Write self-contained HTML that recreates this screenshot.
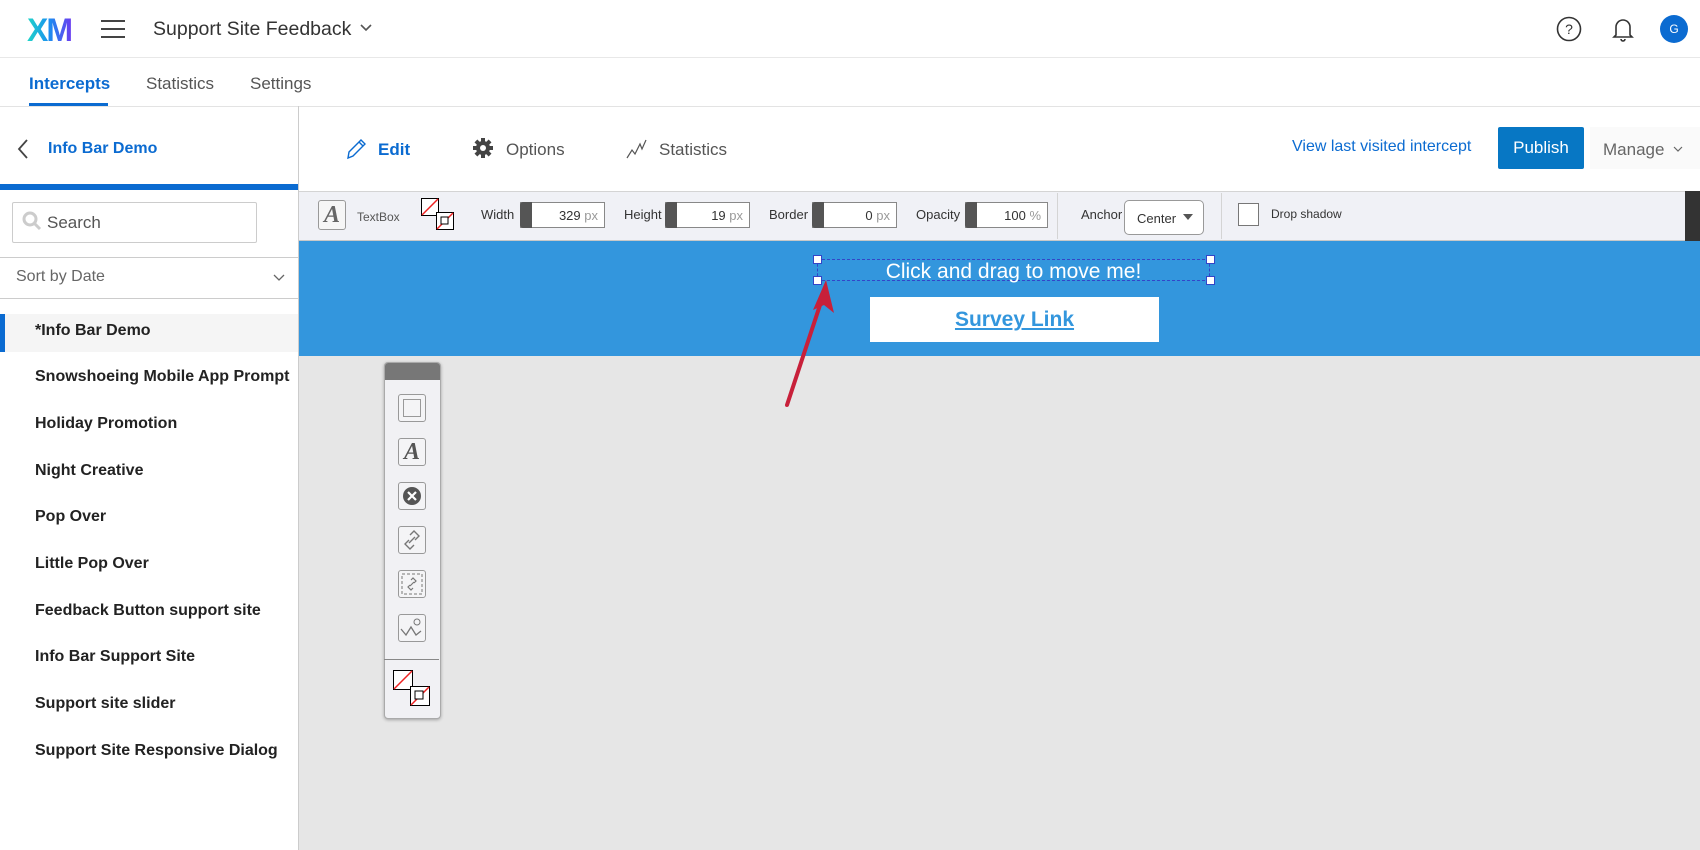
<!DOCTYPE html>
<html><head><meta charset="utf-8"><style>
*{box-sizing:border-box;margin:0;padding:0}
body{width:1700px;height:850px;overflow:hidden;background:#fff;font-family:"Liberation Sans",sans-serif;position:relative;color:#333}
.a{position:absolute;white-space:nowrap}
.lbl{font-size:13px;color:#333}
.num{position:absolute;height:26px;border:1px solid #888;background:#fff;font-size:13px;text-align:right;padding:5px 6px 0 0}
.num .sp{position:absolute;left:-1px;top:-1px;width:12px;height:26px;background:#555;border-radius:3px 0 0 3px}
.num .px{color:#999}
.item{position:absolute;left:35px;font-size:16px;font-weight:bold;color:#222}
.tool{position:absolute;left:14px;width:28px;height:28px;border:1px solid #999;border-radius:3px;background:#f4f4f6}
</style></head><body>
<div class="a" style="left:27px;top:12px;font-size:32px;font-weight:bold;letter-spacing:-2px;background:linear-gradient(90deg,#1fd6c7,#1a8ff0 50%,#6a3df0);-webkit-background-clip:text;color:transparent">XM</div>
<div class="a" style="left:101px;top:20px;width:24px;height:2px;background:#444;box-shadow:0 8px 0 #444,0 16px 0 #444"></div>
<div class="a" style="left:153px;top:18px;font-size:19.5px;color:#333">Support Site Feedback</div>
<svg class="a" style="left:359px;top:23px" width="14" height="10"><path d="M2 2l5 5 5-5" fill="none" stroke="#555" stroke-width="1.6"/></svg>
<svg class="a" style="left:1556px;top:16px" width="26" height="26"><circle cx="13" cy="13" r="11.5" fill="none" stroke="#333" stroke-width="1.6"/><text x="13" y="18" text-anchor="middle" font-size="14" font-family="Liberation Sans" fill="#333">?</text></svg>
<svg class="a" style="left:1611px;top:15px" width="24" height="28"><path d="M5 20V12a7 7 0 0 1 14 0v8l2 2H3z" fill="none" stroke="#333" stroke-width="1.6"/><path d="M10 24a2 2 0 0 0 4 0" fill="none" stroke="#333" stroke-width="1.6"/></svg>
<div class="a" style="left:1660px;top:15px;width:28px;height:28px;border-radius:50%;background:#0b6bd1;color:#fff;font-size:12px;text-align:center;line-height:28px">G</div>
<div class="a" style="left:0;top:57px;width:1700px;height:1px;background:#e8e8e8"></div>
<div class="a" style="left:29px;top:74px;font-size:17px;font-weight:bold;color:#0b6bd1">Intercepts</div>
<div class="a" style="left:29px;top:103px;width:79px;height:3px;background:#0b6bd1"></div>
<div class="a" style="left:146px;top:74px;font-size:17px;color:#555">Statistics</div>
<div class="a" style="left:250px;top:74px;font-size:17px;color:#555">Settings</div>
<div class="a" style="left:0;top:106px;width:1700px;height:1px;background:#e3e3e3"></div>
<div class="a" style="left:298px;top:106px;width:1px;height:744px;background:#ccc"></div>
<svg class="a" style="left:16px;top:138px" width="14" height="22"><path d="M11 2L3 11l8 9" fill="none" stroke="#444" stroke-width="1.8"/></svg>
<div class="a" style="left:48px;top:140px;font-size:16px;font-weight:bold;color:#0b6bd1">Info Bar Demo</div>
<div class="a" style="left:0;top:184px;width:298px;height:6px;background:#0b6bd1"></div>
<div class="a" style="left:12px;top:202px;width:245px;height:41px;border:1px solid #ccc;border-radius:2px"></div>
<svg class="a" style="left:21px;top:210px" width="22" height="22"><circle cx="9" cy="9" r="6" fill="none" stroke="#ccc" stroke-width="3"/><path d="M13 13l6 6" stroke="#ccc" stroke-width="3"/></svg>
<div class="a" style="left:47px;top:213px;font-size:17px;color:#555">Search</div>
<div class="a" style="left:0;top:257px;width:298px;height:1px;background:#ccc"></div>
<div class="a" style="left:16px;top:268px;font-size:16px;color:#666">Sort by Date</div>
<svg class="a" style="left:273px;top:274px" width="12" height="8"><path d="M1 1l5 5 5-5" fill="none" stroke="#666" stroke-width="1.3"/></svg>
<div class="a" style="left:0;top:298px;width:298px;height:1px;background:#ccc"></div>
<div class="a" style="left:0;top:314px;width:298px;height:38px;background:#f5f5f5"></div>
<div class="a" style="left:0;top:314px;width:5px;height:38px;background:#0b6bd1"></div>
<div class="item" style="top:322px">*Info Bar Demo</div>
<div class="item" style="top:368px">Snowshoeing Mobile App Prompt</div>
<div class="item" style="top:415px">Holiday Promotion</div>
<div class="item" style="top:462px">Night Creative</div>
<div class="item" style="top:508px">Pop Over</div>
<div class="item" style="top:555px">Little Pop Over</div>
<div class="item" style="top:602px">Feedback Button support site</div>
<div class="item" style="top:648px">Info Bar Support Site</div>
<div class="item" style="top:695px">Support site slider</div>
<div class="item" style="top:742px">Support Site Responsive Dialog</div>
<div class="a" style="left:299px;top:356px;width:1401px;height:494px;background:#e6e6e6"></div>
<svg class="a" style="left:345px;top:137px" width="22" height="24"><path d="M3 21l1-6L16 3l4 4L8 19z M14 5l4 4" fill="none" stroke="#0b6bd1" stroke-width="1.4"/></svg>
<div class="a" style="left:378px;top:140px;font-size:17px;font-weight:bold;color:#0b6bd1">Edit</div>
<svg class="a" style="left:472px;top:137px" width="22" height="22"><g fill="#444"><circle cx="11" cy="11" r="7"/><rect x="9" y="1" width="4" height="20"/><rect x="1" y="9" width="20" height="4"/><rect x="9" y="1" width="4" height="20" transform="rotate(45 11 11)"/><rect x="9" y="1" width="4" height="20" transform="rotate(-45 11 11)"/></g><circle cx="11" cy="11" r="3" fill="#fff"/></svg>
<div class="a" style="left:506px;top:140px;font-size:17px;color:#555">Options</div>
<svg class="a" style="left:626px;top:138px" width="22" height="22"><path d="M1 20l5-8 3 4 5-10 2 5 4-9" fill="none" stroke="#555" stroke-width="1.2"/></svg>
<div class="a" style="left:659px;top:140px;font-size:17px;color:#555">Statistics</div>
<div class="a" style="left:1292px;top:138px;font-size:16px;color:#0b6bd1">View last visited intercept</div>
<div class="a" style="left:1498px;top:127px;width:86px;height:42px;background:#0777c4;border-radius:2px;color:#fff;font-size:17px;text-align:center;line-height:42px">Publish</div>
<div class="a" style="left:1590px;top:127px;width:110px;height:42px;background:#fafafa"></div>
<div class="a" style="left:1603px;top:140px;font-size:17px;color:#666">Manage</div>
<svg class="a" style="left:1673px;top:146px" width="10" height="7"><path d="M1 1l4 4 4-4" fill="none" stroke="#666" stroke-width="1.2"/></svg>
<div class="a" style="left:299px;top:191px;width:1401px;height:50px;background:#f0f1f6;border-top:1px solid #d4d4d4;border-bottom:1px solid #c8c8c8"></div>
<div class="a" style="left:318px;top:200px;width:28px;height:30px;border:1px solid #999;border-radius:3px;background:#f6f6f6;font-family:'Liberation Serif',serif;font-style:italic;font-weight:bold;font-size:24px;color:#666;text-align:center;line-height:28px">A</div>
<div class="a lbl" style="left:357px;top:210px;color:#555;font-size:12px">TextBox</div>
<svg class="a" style="left:420px;top:197px" width="36" height="36"><rect x="1.5" y="1.5" width="17" height="17" fill="#fff" stroke="#000"/><path d="M2 18L18 2" stroke="#e22" stroke-width="1.5"/><rect x="16.5" y="15.5" width="17" height="17" fill="#fff" stroke="#000"/><path d="M17 32L33 16" stroke="#e22" stroke-width="1.5"/><rect x="21" y="20" width="7" height="7" fill="#fff" stroke="#000"/></svg>
<div class="a lbl" style="left:481px;top:207px">Width</div>
<div class="num" style="left:520px;top:202px;width:85px"><span class="sp"></span>329 <span class="px">px</span></div>
<div class="a lbl" style="left:624px;top:207px">Height</div>
<div class="num" style="left:665px;top:202px;width:85px"><span class="sp"></span>19 <span class="px">px</span></div>
<div class="a lbl" style="left:769px;top:207px">Border</div>
<div class="num" style="left:812px;top:202px;width:85px"><span class="sp"></span>0 <span class="px">px</span></div>
<div class="a lbl" style="left:916px;top:207px">Opacity</div>
<div class="num" style="left:965px;top:202px;width:83px"><span class="sp"></span>100 <span class="px">%</span></div>
<div class="a" style="left:1057px;top:193px;width:1px;height:46px;background:#d4d4d4"></div>
<div class="a lbl" style="left:1081px;top:207px">Anchor</div>
<div class="a" style="left:1124px;top:200px;width:80px;height:35px;border:1px solid #999;border-radius:5px;background:#fff;font-size:13px;padding:10px 0 0 12px">Center</div>
<svg class="a" style="left:1183px;top:214px" width="10" height="6"><path d="M0 0h10L5 6z" fill="#555"/></svg>
<div class="a" style="left:1221px;top:193px;width:1px;height:46px;background:#d4d4d4"></div>
<div class="a" style="left:1238px;top:203px;width:21px;height:23px;border:1px solid #777;background:#fff"></div>
<div class="a lbl" style="left:1271px;top:207px;font-size:12px">Drop shadow</div>
<div class="a" style="left:1685px;top:191px;width:15px;height:50px;background:#333"></div>
<div class="a" style="left:299px;top:241px;width:1401px;height:115px;background:#3396dd"></div>
<div class="a" style="left:817px;top:259px;width:393px;height:22px;border:1px dashed #3345c8"></div>
<div class="a" style="left:813px;top:255px;width:9px;height:9px;border:1px solid #3345c8;background:#fff"></div>
<div class="a" style="left:1206px;top:255px;width:9px;height:9px;border:1px solid #3345c8;background:#fff"></div>
<div class="a" style="left:813px;top:276px;width:9px;height:9px;border:1px solid #3345c8;background:#fff"></div>
<div class="a" style="left:1206px;top:276px;width:9px;height:9px;border:1px solid #3345c8;background:#fff"></div>
<div class="a" style="left:817px;top:260px;width:393px;text-align:center;font-size:21px;color:#fff">Click and drag to move me!</div>
<div class="a" style="left:870px;top:297px;width:289px;height:45px;background:#fff;text-align:center;font-size:21px;font-weight:bold;color:#3396dd;text-decoration:underline;line-height:45px">Survey Link</div>
<svg class="a" style="left:770px;top:270px" width="80" height="150"><path d="M17 135L53 26" stroke="#c8203a" stroke-width="4" stroke-linecap="round"/><path d="M56 10L43 40l11-5 10 8z" fill="#c8203a"/></svg>
<div class="a" style="left:384px;top:362px;width:57px;height:357px;background:#f1f1f4;border:1px solid #aaa;border-radius:4px;box-shadow:0 1px 3px rgba(0,0,0,.3)"></div>
<div class="a" style="left:385px;top:363px;width:55px;height:17px;background:#777;border-radius:3px 3px 0 0"></div>
<div class="a" style="left:384px;top:362px;width:57px;height:357px">
<div class="tool" style="top:32px"><div style="margin:4px;width:18px;height:18px;border:1px solid #999"></div></div>
<div class="tool" style="top:76px;font-family:'Liberation Serif',serif;font-style:italic;font-weight:bold;font-size:24px;color:#555;text-align:center;line-height:26px">A</div>
<div class="tool" style="top:120px"><svg width="26" height="26"><circle cx="13" cy="13" r="9" fill="#555"/><path d="M9 9l8 8M17 9l-8 8" stroke="#fff" stroke-width="2.2"/></svg></div>
<div class="tool" style="top:164px"><svg width="26" height="26"><path d="M11 8l4-4 5 5-4 4M15 18l-4 4-5-5 4-4M10 16l6-6" fill="none" stroke="#777" stroke-width="1.4"/></svg></div>
<div class="tool" style="top:208px"><svg width="26" height="26"><rect x="3" y="3" width="20" height="20" fill="none" stroke="#777" stroke-dasharray="3 2"/><path d="M12 9l2-2 3 3-2 2M14 17l-2 2-3-3 2-2M11 15l4-4" fill="none" stroke="#777" stroke-width="1.2"/></svg></div>
<div class="tool" style="top:252px"><svg width="26" height="26"><path d="M2 14l5 6 5-8 5 8 5-4" fill="none" stroke="#777" stroke-width="1.3"/><circle cx="18" cy="7" r="3" fill="none" stroke="#777"/></svg></div>
<div style="position:absolute;left:0;top:297px;width:55px;height:1px;background:#888"></div>
<svg style="position:absolute;left:8px;top:307px" width="40" height="40"><rect x="1.5" y="1.5" width="19" height="19" fill="#fff" stroke="#000"/><path d="M2 20L20 2" stroke="#e22" stroke-width="1.5"/><rect x="18.5" y="17.5" width="19" height="19" fill="#fff" stroke="#000"/><path d="M19 36L37 18" stroke="#e22" stroke-width="1.5"/><rect x="23" y="22" width="8" height="8" fill="#fff" stroke="#000"/></svg>
</div>
</body></html>
